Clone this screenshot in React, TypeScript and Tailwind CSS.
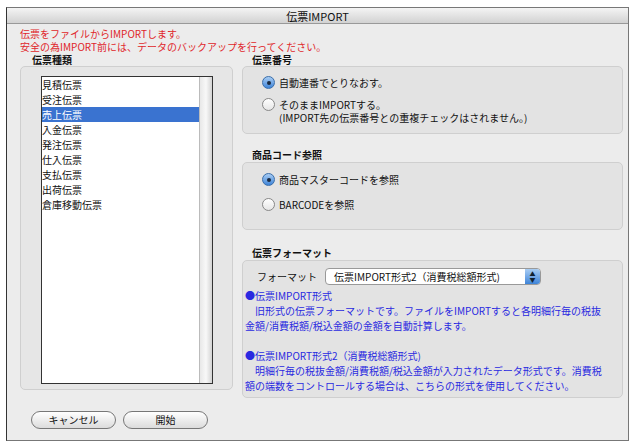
import React from "react";

const F = { fontFamily: '"Noto Sans CJK JP", "Liberation Sans", sans-serif' };

function Radio({ on }: { on?: boolean }) {
  return on ? (
    <span className="inline-flex w-[13px] h-[13px] rounded-full bg-gradient-to-b from-[#a9cdf3] to-[#3d84d8] border border-[#3a6eaa] items-center justify-center shrink-0">
      <span className="w-[4px] h-[4px] rounded-full bg-[#1a2a40]" />
    </span>
  ) : (
    <span className="inline-block w-[13px] h-[13px] rounded-full bg-gradient-to-b from-white to-[#e6e6e6] border border-[#888] shrink-0" />
  );
}

const items = ["見積伝票", "受注伝票", "売上伝票", "入金伝票", "発注伝票", "仕入伝票", "支払伝票", "出荷伝票", "倉庫移動伝票"];

export default function App() {
  return (
    <div style={F} className="w-[640px] h-[447px] bg-white pt-[7px] pl-[6px] text-[10px] text-[#111]">
      <div className="w-[623px] h-[434px] border border-[#777] border-l-[#333] bg-[#ececec] flex flex-col">
        <div className="h-[16px] bg-gradient-to-b from-[#f4f4f4] to-[#d2d2d2] border-b border-[#999] flex items-center justify-center text-[11px] leading-[14px]">伝票IMPORT</div>
        <div className="pl-[13px] pt-[3px] text-[#e0262a] leading-[13px]">
          <div className="h-[13px]">伝票をファイルからIMPORTします。</div>
          <div className="h-[13px]">安全の為IMPORT前には、データのバックアップを行ってください。</div>
        </div>
        <div className="flex gap-[9px] pl-[13px] pr-[5px] mt-[1px]">
          <div className="w-[213px] flex flex-col">
            <div className="pl-[12px] font-bold h-[11px] leading-[11px]">伝票種類</div>
            <div className="mt-[1px] h-[324px] rounded-[5px] border border-[#cfcfcf] bg-[#e6e6e6] pl-[20px] pt-[9px]">
              <div className="w-[172px] h-[308px] border border-[#333] bg-white flex">
                <div className="flex-1 leading-[15px] text-[10px]">
                  {items.map((t, i) => (
                    <div key={t} className={"h-[15px] " + (i === 2 ? "bg-[#3a73d0] text-white" : "")}>{t}</div>
                  ))}
                </div>
                <div className="w-[13px] bg-gradient-to-r from-[#e8e8e8] via-[#f8f8f8] to-[#d4d4d4] border-l border-[#bbb]" />
              </div>
            </div>
          </div>
          <div className="flex-1 flex flex-col">
            <div className="pl-[10px] font-bold h-[11px] leading-[11px]">伝票番号</div>
            <div className="mt-[1px] h-[68px] rounded-[5px] border border-[#cfcfcf] bg-[#e3e3e3] pl-[19px] pt-[9px]">
              <div className="flex items-center gap-[4px] h-[13px] leading-[13px]"><Radio on />自動連番でとりなおす。</div>
              <div className="flex gap-[4px] mt-[9px] leading-[13px]"><Radio /><div>そのままIMPORTする。<br />(IMPORT先の伝票番号との重複チェックはされません。)</div></div>
            </div>
            <div className="pl-[10px] font-bold mt-[15px] h-[11px] leading-[11px]">商品コード参照</div>
            <div className="mt-[2px] h-[68px] rounded-[5px] border border-[#cfcfcf] bg-[#e3e3e3] pl-[19px] pt-[10px]">
              <div className="flex items-center gap-[4px] h-[13px] leading-[13px]"><Radio on />商品マスターコードを参照</div>
              <div className="flex items-center gap-[4px] mt-[12px] h-[13px] leading-[13px]"><Radio />BARCODEを参照</div>
            </div>
            <div className="pl-[10px] font-bold mt-[17px] h-[11px] leading-[11px]">伝票フォーマット</div>
            <div className="mt-[2px] h-[138px] rounded-[5px] border border-[#cfcfcf] bg-[#e3e3e3] pl-[2px] pt-[7px]">
              <div className="flex items-center gap-[8px] pl-[12px]">
                <span>フォーマット</span>
                <div className="w-[216px] h-[17px] rounded-[4px] border border-[#999] bg-white flex items-center pl-[8px] justify-between">
                  <span className="leading-[13px] whitespace-nowrap">伝票IMPORT形式2（消費税総額形式)</span>
                  <span className="w-[15px] h-[15px] rounded-r-[3px] bg-gradient-to-b from-[#a9cdf3] to-[#3d84d8] text-[#123] text-[6px] leading-[6px] flex flex-col items-center justify-center"><span>▲</span><span>▼</span></span>
                </div>
              </div>
              <div className="text-[#2a2ae0] leading-[15px] mt-[3px] text-[10px]">
                <div>●伝票IMPORT形式</div>
                <div>　旧形式の伝票フォーマットです。ファイルをIMPORTすると各明細行毎の税抜</div>
                <div>金額/消費税額/税込金額の金額を自動計算します。</div>
                <div className="h-[15px]" />
                <div>●伝票IMPORT形式2（消費税総額形式)</div>
                <div>　明細行毎の税抜金額/消費税額/税込金額が入力されたデータ形式です。消費税</div>
                <div>額の端数をコントロールする場合は、こちらの形式を使用してください。</div>
              </div>
            </div>
          </div>
        </div>
        <div className="flex gap-[7px] pl-[24px] mt-[13px]">
          <button className="w-[85px] h-[18px] rounded-full border border-[#777] bg-gradient-to-b from-white to-[#dcdcdc] text-[10px] leading-[14px]">キャンセル</button>
          <button className="w-[85px] h-[18px] rounded-full border border-[#777] bg-gradient-to-b from-white to-[#dcdcdc] text-[10px] leading-[14px]">開始</button>
        </div>
      </div>
    </div>
  );
}
